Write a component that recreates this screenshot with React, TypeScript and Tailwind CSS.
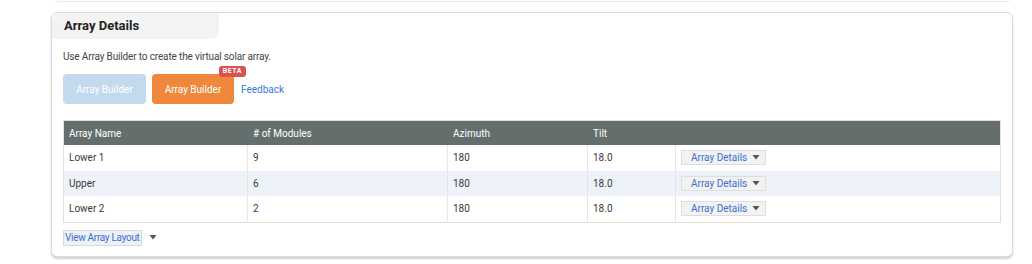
import React from "react";

const rows = [
  { name: "Lower 1", modules: "9", az: "180", tilt: "18.0" },
  { name: "Upper", modules: "6", az: "180", tilt: "18.0" },
  { name: "Lower 2", modules: "2", az: "180", tilt: "18.0" },
];

function Caret({ ml }: { ml: string }) {
  return (
    <svg width="8" height="5" viewBox="0 0 8 5" className={`${ml} shrink-0`}>
      <path d="M0.5 0 L7.5 0 L4 4.5 Z" fill="#555" />
    </svg>
  );
}

export default function App() {
  return (
    <div
      className="w-[1032px] h-[264px] bg-white relative overflow-hidden"
      style={{ fontFamily: "Roboto, 'Liberation Sans', sans-serif" }}
    >
      <div className="ml-[55px] w-[955px] h-[2px] border-b border-[#ececec] rounded-b-[4px]" />
      <div className="ml-[51px] mt-[10px] w-[962px] h-[245px] border border-[#dcdcdc] rounded-[6px] shadow-[0_2px_2px_rgba(0,0,0,0.18)] bg-white">
        <div className="w-[167px] h-[26px] bg-[#f3f3f3] rounded-tl-[6px] rounded-br-[8px] flex items-center pl-[12px] text-[13px] font-bold text-[#222]">
          Array Details
        </div>
        <div className="px-[11px]">
          <div className="mt-[11px] text-[10px] tracking-[-0.15px] leading-[14px] text-[#444]">
            Use Array Builder to create the virtual solar array.
          </div>
          <div className="mt-[10px] flex items-center h-[30px]">
            <div className="w-[83px] h-[30px] rounded-[4px] bg-[#c3d9ee] flex items-center justify-center text-[10px] text-white">
              Array Builder
            </div>
            <div className="relative ml-[6px] w-[82px] h-[30px] rounded-[4px] bg-[#f0883c] flex items-center justify-center text-[10px] text-white">
              Array Builder
              <div className="absolute right-[-12px] top-[-8px] h-[11px] px-[4px] rounded-[3px] bg-[#d9534f] text-white text-[7px] font-bold leading-[11px] tracking-[0.5px]">
                BETA
              </div>
            </div>
            <div className="ml-[7px] text-[10px] text-[#3a7bd5]">Feedback</div>
          </div>
          <div className="mt-[16px] w-[938px] border border-[#e3e0cc]">
            <div className="flex h-[24px] bg-[#646f6d] text-white text-[10px] items-center">
              <div className="w-[184px] pl-[5px]">Array Name</div>
              <div className="w-[200px] pl-[5px]"># of Modules</div>
              <div className="w-[140px] pl-[5px]">Azimuth</div>
              <div className="w-[88px] pl-[5px]">Tilt</div>
              <div className="flex-1" />
            </div>
            {rows.map((r, i) => (
              <div
                key={r.name}
                className={`flex h-[25.5px] text-[10px] text-[#3a3a3a] items-center ${
                  i === 1 ? "bg-[#eef3fa]" : "bg-white"
                }`}
              >
                <div className="w-[184px] pl-[5px] h-full flex items-center border-r border-[#e6e6e6]">
                  {r.name}
                </div>
                <div className="w-[200px] pl-[5px] h-full flex items-center border-r border-[#e6e6e6]">
                  {r.modules}
                </div>
                <div className="w-[140px] pl-[5px] h-full flex items-center border-r border-[#e6e6e6]">
                  {r.az}
                </div>
                <div className="w-[88px] pl-[5px] h-full flex items-center border-r border-[#e6e6e6]">
                  {r.tilt}
                </div>
                <div className="flex-1 pl-[5px] h-full flex items-center">
                  <div className="h-[15px] w-[85px] whitespace-nowrap bg-[#f2f2f2] border border-[#dedede] flex items-center pl-[9px] text-[#3b6fcf] text-[10px]">
                    Array Details
                    <Caret ml="ml-[5px]" />
                  </div>
                </div>
              </div>
            ))}
          </div>
          <div className="mt-[7px] flex items-center">
            <div className="h-[16px] px-[1px] whitespace-nowrap bg-[#eef1f6] border border-[#d6d9de] flex items-center text-[10px] text-[#3a6fd0] tracking-[-0.3px]">
              View Array Layout
            </div>
            <Caret ml="ml-[7px]" />
          </div>
        </div>
      </div>
    </div>
  );
}
